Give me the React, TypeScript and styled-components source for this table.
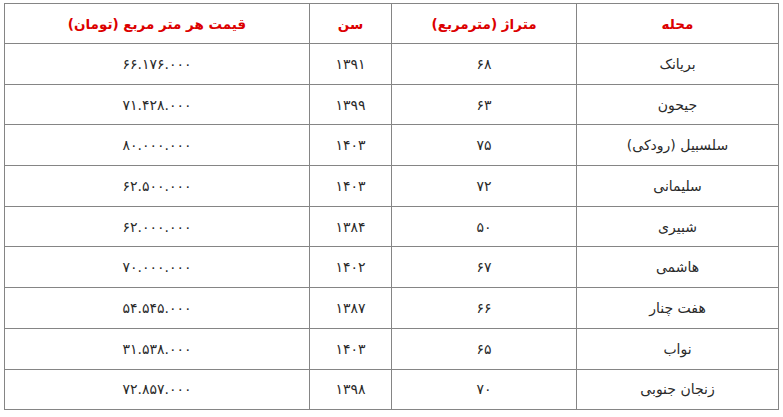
import React from 'react';
import styled, { createGlobalStyle } from 'styled-components';

const GlobalStyle = createGlobalStyle`
  body {
    margin: 0;
    background: #ffffff;
    font-family: "DejaVu Sans", "Noto Sans", sans-serif;
  }
`;

interface Row {
  name: string;
  area: string;
  year: string;
  price: string;
}

// rows of the neighbourhood price table
const rows: Row[] = [
  { name: 'بریانک', area: '۶۸', year: '۱۳۹۱', price: '۶۶.۱۷۶.۰۰۰' },
  { name: 'جیحون', area: '۶۳', year: '۱۳۹۹', price: '۷۱.۴۲۸.۰۰۰' },
  { name: 'سلسبیل (رودکی)', area: '۷۵', year: '۱۴۰۳', price: '۸۰.۰۰۰.۰۰۰' },
  { name: 'سلیمانی', area: '۷۲', year: '۱۴۰۳', price: '۶۲.۵۰۰.۰۰۰' },
  { name: 'شبیری', area: '۵۰', year: '۱۳۸۴', price: '۶۲.۰۰۰.۰۰۰' },
  { name: 'هاشمی', area: '۶۷', year: '۱۴۰۲', price: '۷۰.۰۰۰.۰۰۰' },
  { name: 'هفت چنار', area: '۶۶', year: '۱۳۸۷', price: '۵۴.۵۴۵.۰۰۰' },
  { name: 'نواب', area: '۶۵', year: '۱۴۰۳', price: '۳۱.۵۳۸.۰۰۰' },
  { name: 'زنجان جنوبی', area: '۷۰', year: '۱۳۹۸', price: '۷۲.۸۵۷.۰۰۰' },
];

export default function App() {
  return (
    <Page>
      <GlobalStyle />
      <PriceTable dir='rtl'>
        <colgroup>
          <col style={{ width: 202 }} />
          <col style={{ width: 185 }} />
          <col style={{ width: 82 }} />
          <col style={{ width: 305 }} />
        </colgroup>
        <thead>
          <tr>
            <HeadCell>محله</HeadCell>
            <HeadCell>متراژ (مترمربع)</HeadCell>
            <HeadCell>سن</HeadCell>
            <HeadCell>قیمت هر متر مربع (تومان)</HeadCell>
          </tr>
        </thead>
        <tbody>
          {rows.map((r) => (
            <tr key={r.name}>
              <Cell>{r.name}</Cell>
              <Cell>{r.area}</Cell>
              <Cell>{r.year}</Cell>
              <Cell>{r.price}</Cell>
            </tr>
          ))}
        </tbody>
      </PriceTable>
    </Page>
  );
}

const Page = styled.div`
  padding: 3px 0 0 4px;
`;

const PriceTable = styled.table`
  border-collapse: collapse;
  table-layout: fixed;
  width: 775px;
  border: 1px solid #858585;
`;

const HeadCell = styled.th`
  height: 39px;
  padding: 0;
  border: 1px solid #858585;
  color: #dc0000;
  font-size: 13.5px;
  font-weight: bold;
  text-align: center;
  vertical-align: middle;
`;

const Cell = styled.td`
  height: 39.7px;
  padding: 0;
  border: 1px solid #858585;
  color: #2a2a2a;
  font-size: 14px;
  text-align: center;
  vertical-align: middle;
`;
